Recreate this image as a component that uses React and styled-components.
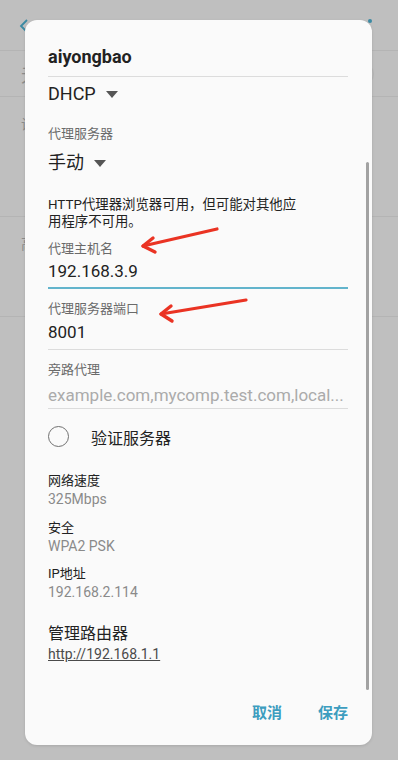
import React from "react";
import styled, { createGlobalStyle } from "styled-components";

const Global = createGlobalStyle`
  html, body { margin: 0; padding: 0; background: #bfbfbf; }
  body { font-family: Roboto, "Noto Sans CJK SC", sans-serif; }
  * { box-sizing: border-box; }
`;

const FONT = `Roboto, "Noto Sans CJK SC", sans-serif`;

const Screen = styled.div`
  position: relative;
  width: 398px;
  height: 760px;
  overflow: hidden;
  background: #bfbfbf;
  font-family: ${FONT};
`;

/* ---------- dimmed page behind the dialog ---------- */
const Page = styled.div`
  display: flex;
  flex-direction: column;
  width: 100%;
`;

const PageBar = styled.div`
  height: 51px;
  display: flex;
  align-items: center;
  justify-content: space-between;
  padding: 0 26px 0 19px;
  border-bottom: 1px solid #b4b4b4;
`;

const BackIcon = styled.svg`
  width: 10px;
  height: 14px;
  margin-top: 2px;
`;

const MenuDot = styled.div`
  width: 4px;
  height: 4px;
  border-radius: 50%;
  background: #3a8aa3;
  margin-top: -9px;
`;

const PageRow = styled.div`
  height: ${(p) => p.$h}px;
  display: flex;
  align-items: ${(p) => (p.$top ? "flex-start" : "center")};
  justify-content: space-between;
  padding: ${(p) => (p.$top ? "16px" : "0")} 0 0 21px;
  border-bottom: ${(p) => (p.$line ? "1px solid #b4b4b4" : "none")};
  color: #8c8c8c;
  font-size: ${(p) => p.$fs || 18}px;
`;

const PageToggle = styled.div`
  width: 24px;
  height: 24px;
  border-radius: 50%;
  border: 1px solid #b4b4b4;
  margin-right: 24px;
`;

/* ---------- dialog ---------- */
const Dialog = styled.div`
  position: absolute;
  left: 25px;
  top: 20px;
  width: 347px;
  height: 725px;
  border-radius: 12px;
  background: #fafafa;
  box-shadow: 0 1px 3px rgba(0, 0, 0, 0.12);
  display: flex;
  flex-direction: column;
`;

const Body = styled.div`
  flex: 1;
  display: flex;
  flex-direction: column;
  padding: 25px 24px 0 23px;
`;

const Title = styled.div`
  font-size: 18px;
  line-height: 24px;
  font-weight: 700;
  color: #222;
`;

const Divider = styled.div`
  height: ${(p) => (p.$accent ? 1.5 : 1)}px;
  background: ${(p) => (p.$accent ? "#62b4cc" : "#dcdcdc")};
  margin-top: ${(p) => p.$mt || 0}px;
`;

const Spinner = styled.div`
  display: flex;
  align-items: center;
  gap: 10px;
  font-size: 18px;
  line-height: 24px;
  color: #222;
  margin-top: ${(p) => p.$mt || 0}px;
`;

const Caret = styled.span`
  width: 0;
  height: 0;
  border-left: 6px solid transparent;
  border-right: 6px solid transparent;
  border-top: 7px solid #555;
  margin-top: 1px;
`;

const Label = styled.div`
  font-size: 13px;
  line-height: 18px;
  color: ${(p) => (p.$dark ? "#222" : "#6a6a6a")};
  margin-top: ${(p) => p.$mt || 0}px;
`;

const Note = styled.div`
  font-size: 13.4px;
  line-height: 17px;
  color: #222;
  max-width: 252px;
  margin-top: ${(p) => p.$mt || 0}px;
`;

const Value = styled.div`
  font-size: 17px;
  line-height: 24px;
  color: #222;
  margin-top: ${(p) => p.$mt || 0}px;
  white-space: nowrap;
`;

const Placeholder = styled(Value)`
  font-size: 17px;
  line-height: 22px;
  color: #ababab;
`;

const RadioRow = styled.div`
  display: flex;
  align-items: center;
  height: 28px;
  margin-top: ${(p) => p.$mt || 0}px;
  gap: 22px;
  font-size: 16px;
  color: #222;
`;

const Radio = styled.span`
  width: 21px;
  height: 21px;
  border-radius: 50%;
  border: 1.5px solid #707070;
`;

const InfoValue = styled.div`
  font-size: 14px;
  line-height: 18px;
  color: #8a8a8a;
`;

const RouterTitle = styled.div`
  font-size: 16px;
  line-height: 22px;
  color: #222;
  margin-top: ${(p) => p.$mt || 0}px;
`;

const Link = styled.a`
  font-size: 14px;
  line-height: 18px;
  color: #4a4a4a;
  text-decoration: underline;
  align-self: flex-start;
`;

const Actions = styled.div`
  display: flex;
  justify-content: flex-end;
  gap: 36px;
  padding: 0 24px 21px 0;
`;

const ActionButton = styled.button`
  border: none;
  background: none;
  padding: 0;
  font-family: ${FONT};
  font-size: 15px;
  line-height: 22px;
  font-weight: 700;
  color: #3d9dbf;
`;

const Scrollbar = styled.div`
  position: absolute;
  left: 341px;
  top: 142px;
  width: 3px;
  height: 528px;
  border-radius: 2px;
  background: #a2a2a2;
`;

const Annotation = styled.svg`
  position: absolute;
  left: 0;
  top: 0;
  width: 398px;
  height: 760px;
  pointer-events: none;
`;

function Arrow({ tail, tip, w1, w2 }) {
  return (
    <g stroke="#ea3323" strokeLinecap="round" strokeLinejoin="round" fill="none">
      <path d={`M${tail[0]} ${tail[1]} L${tip[0]} ${tip[1]}`} strokeWidth="3.2" />
      <path
        d={`M${w1[0]} ${w1[1]} L${tip[0]} ${tip[1]} L${w2[0]} ${w2[1]}`}
        strokeWidth="3.4"
      />
    </g>
  );
}

export default function App() {
  return (
    <>
      <Global />
      <Screen>
        <Page>
          <PageBar>
            <BackIcon viewBox="0 0 10 14">
              <path d="M8 1 L2 7 L8 13" stroke="#3a8aa3" strokeWidth="1.8" fill="none" />
            </BackIcon>
            <MenuDot />
          </PageBar>
          <PageRow $h={46} $line>
            <span>无</span>
            <PageToggle />
          </PageRow>
          <PageRow $h={120} $line $top $fs={14}>
            <span>设</span>
          </PageRow>
          <PageRow $h={100} $line $top $fs={14}>
            <span>高</span>
          </PageRow>
        </Page>

        <Dialog>
          <Body>
            <Title>aiyongbao</Title>
            <Divider $mt={7} />
            <Spinner $mt={5}>
              DHCP <Caret />
            </Spinner>
            <Label $mt={19}>代理服务器</Label>
            <Spinner $mt={8}>
              手动 <Caret />
            </Spinner>
            <Note $mt={21}>HTTP代理器浏览器可用，但可能对其他应用程序不可用。</Note>
            <Label $mt={10}>代理主机名</Label>
            <Value $mt={1}>192.168.3.9</Value>
            <Divider $accent $mt={4} />
            <Label $mt={11}>代理服务器端口</Label>
            <Value $mt={2}>8001</Value>
            <Divider $mt={5} />
            <Label $mt={11}>旁路代理</Label>
            <Placeholder $mt={5}>example.com,mycomp.test.com,local...</Placeholder>
            <Divider $mt={2} />
            <RadioRow $mt={14}>
              <Radio />
              验证服务器
            </RadioRow>
            <Label $dark $mt={21}>网络速度</Label>
            <InfoValue>325Mbps</InfoValue>
            <Label $dark $mt={11}>安全</Label>
            <InfoValue>WPA2 PSK</InfoValue>
            <Label $dark $mt={10}>IP地址</Label>
            <InfoValue>192.168.2.114</InfoValue>
            <RouterTitle $mt={22}>管理路由器</RouterTitle>
            <Link>http://192.168.1.1</Link>
          </Body>
          <Actions>
            <ActionButton>取消</ActionButton>
            <ActionButton>保存</ActionButton>
          </Actions>
          <Scrollbar />
        </Dialog>

        <Annotation viewBox="0 0 398 760">
          <Arrow tail={[217, 229]} tip={[143, 246]} w1={[153, 238]} w2={[155, 252]} />
          <Arrow tail={[246, 300]} tip={[161, 314]} w1={[171, 306]} w2={[172, 321]} />
        </Annotation>
      </Screen>
    </>
  );
}
